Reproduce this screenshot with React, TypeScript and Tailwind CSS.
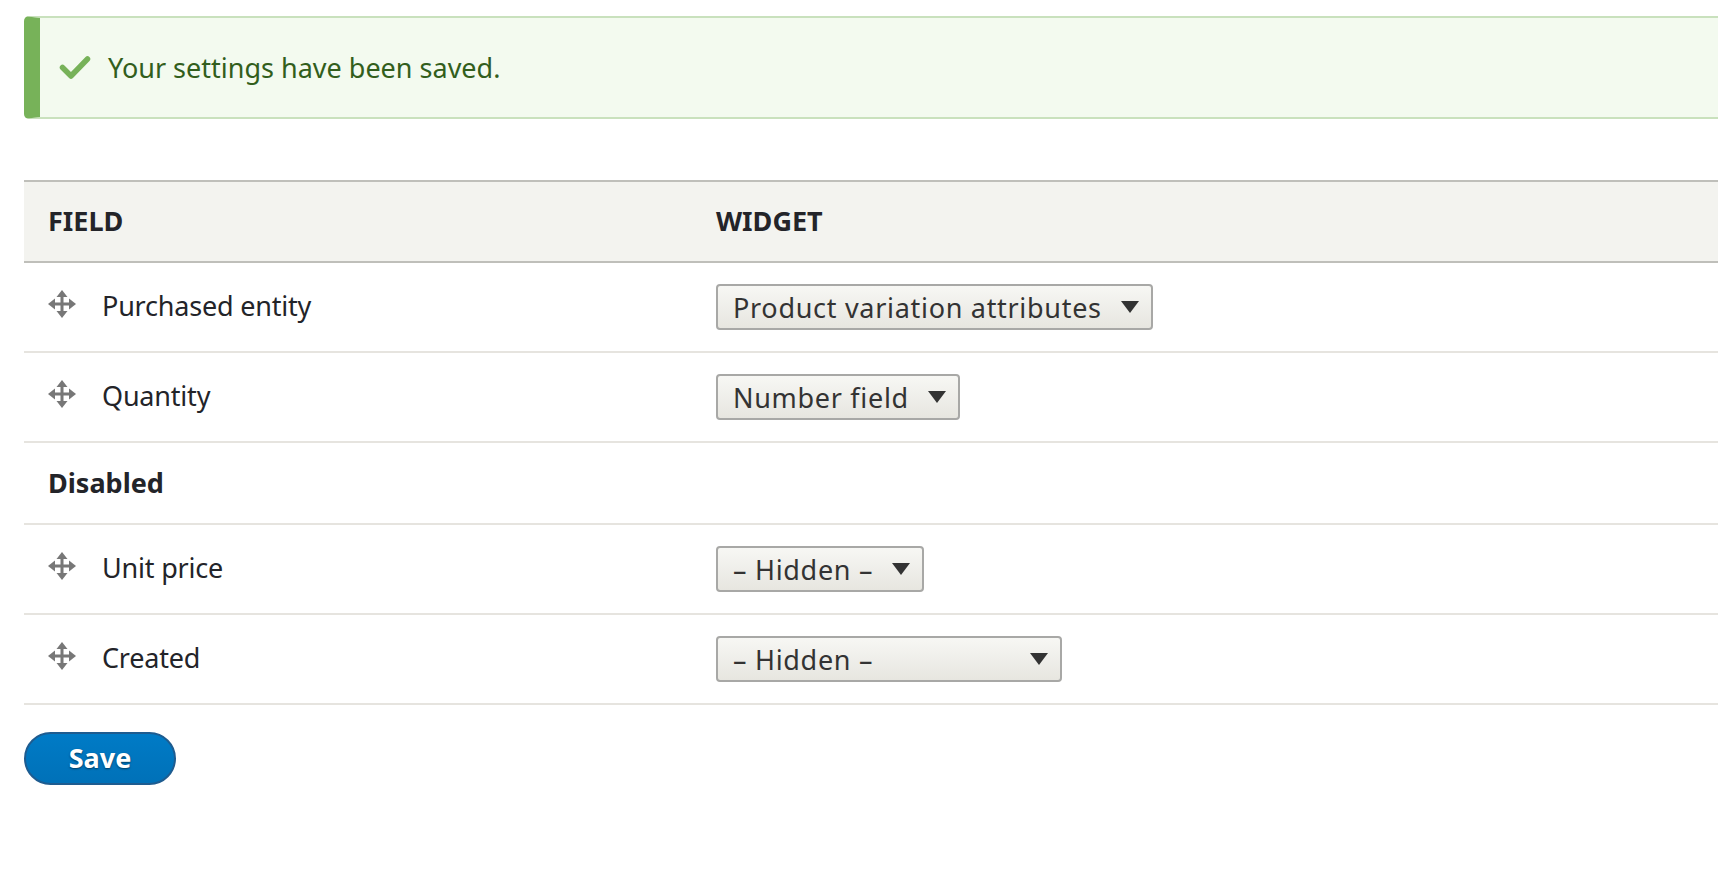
import React from "react";

interface Row {
  label: string;
  widget: string;
  width?: string;
}

const enabledRows: Row[] = [
  { label: "Purchased entity", widget: "Product variation attributes" },
  { label: "Quantity", widget: "Number field" },
];

const disabledRows: Row[] = [
  { label: "Unit price", widget: "– Hidden –" },
  { label: "Created", widget: "– Hidden –", width: "w-[346px]" },
];

export default function App() {
  return (
    <div className="w-full min-h-[878px] overflow-hidden bg-white text-[#232429] font-['Noto_Sans',sans-serif] text-[27px]">
      <div className="pl-[24px] pt-[16px] pb-[60px]">
        {/* status message */}
        <div className="-mr-6 flex items-center h-[103px] rounded-l-[5px] border-2 border-l-[16px] border-[#c9e1bd] border-l-[#77b259] bg-[#f3faef]">
          <CheckIcon className="ml-[19px] w-[32px] h-[25px] text-[#77b259]" />
          <span className="ml-[17px] text-[#325e1c] leading-none pb-[1px]">Your settings have been saved.</span>
        </div>

        {/* field table */}
        <div className="-mr-6 mt-[61px]">
          <div className="flex items-center h-[83px] bg-[#f3f3ef] border-y-2 border-[#bfbfba] font-bold uppercase">
            <div className="w-[668px] pl-[24px]">Field</div>
            <div className="pl-[24px]">Widget</div>
          </div>
          {enabledRows.map((row) => (
            <FieldRow key={row.label} row={row} />
          ))}
          <div className="flex items-center h-[82px] border-b-2 border-[#e6e4df] pl-[24px] font-bold">
            Disabled
          </div>
          {disabledRows.map((row) => (
            <FieldRow key={row.label} row={row} />
          ))}
        </div>

        <button className="mt-[27px] w-[152px] h-[53px] rounded-full border-2 border-[#1e5c90] bg-gradient-to-b from-[#007bc6] to-[#0071b8] text-white font-bold [text-shadow:0_1px_2px_rgba(0,0,0,0.5)] leading-none pb-[2px]">
          Save
        </button>
      </div>
    </div>
  );
}

function FieldRow({ row }: { row: Row }) {
  return (
    <div className="flex items-center h-[90px] border-b-2 border-[#e6e4df]">
      <div className="w-[668px] pl-[24px] flex items-center">
        <MoveIcon className="w-[28px] h-[28px] text-[#777777] -mt-[6px]" />
        <span className="ml-[26px] leading-none pb-[3px] tracking-[-0.2px]">{row.label}</span>
      </div>
      <div className="pl-[24px]">
        <div
          className={`${row.width ?? ""} flex items-center justify-between h-[46px] pl-[15px] pr-[12px] rounded-[4px] border-2 border-[#a8a8a6] bg-gradient-to-b from-[#f7f7f4] to-[#e7e6e0] text-[#333333] whitespace-nowrap`}
        >
          <span className="leading-none pt-[1px] tracking-[0.7px]">{row.widget}</span>
          <svg viewBox="0 0 18 12" className="ml-[19px] w-[18px] h-[12px] text-[#333333]">
            <path d="M0 0h18L9 12z" fill="currentColor" />
          </svg>
        </div>
      </div>
    </div>
  );
}

function CheckIcon(props: React.SVGProps<SVGSVGElement>) {
  return (
    <svg {...props} viewBox="0 0 32 25" fill="none" stroke="currentColor" strokeWidth="5.5" strokeLinecap="round" strokeLinejoin="round">
      <path d="M3.5 12.5l8.5 8.5L28.5 4" />
    </svg>
  );
}

function MoveIcon(props: React.SVGProps<SVGSVGElement>) {
  return (
    <svg {...props} viewBox="0 0 28 28" fill="currentColor">
      <rect x="12.5" y="5" width="3" height="18" />
      <rect x="5" y="12.5" width="18" height="3" />
      <path d="M14 0l5.5 7h-11z" />
      <path d="M14 28l5.5-7h-11z" />
      <path d="M0 14l7-5.5v11z" />
      <path d="M28 14l-7-5.5v11z" />
    </svg>
  );
}
